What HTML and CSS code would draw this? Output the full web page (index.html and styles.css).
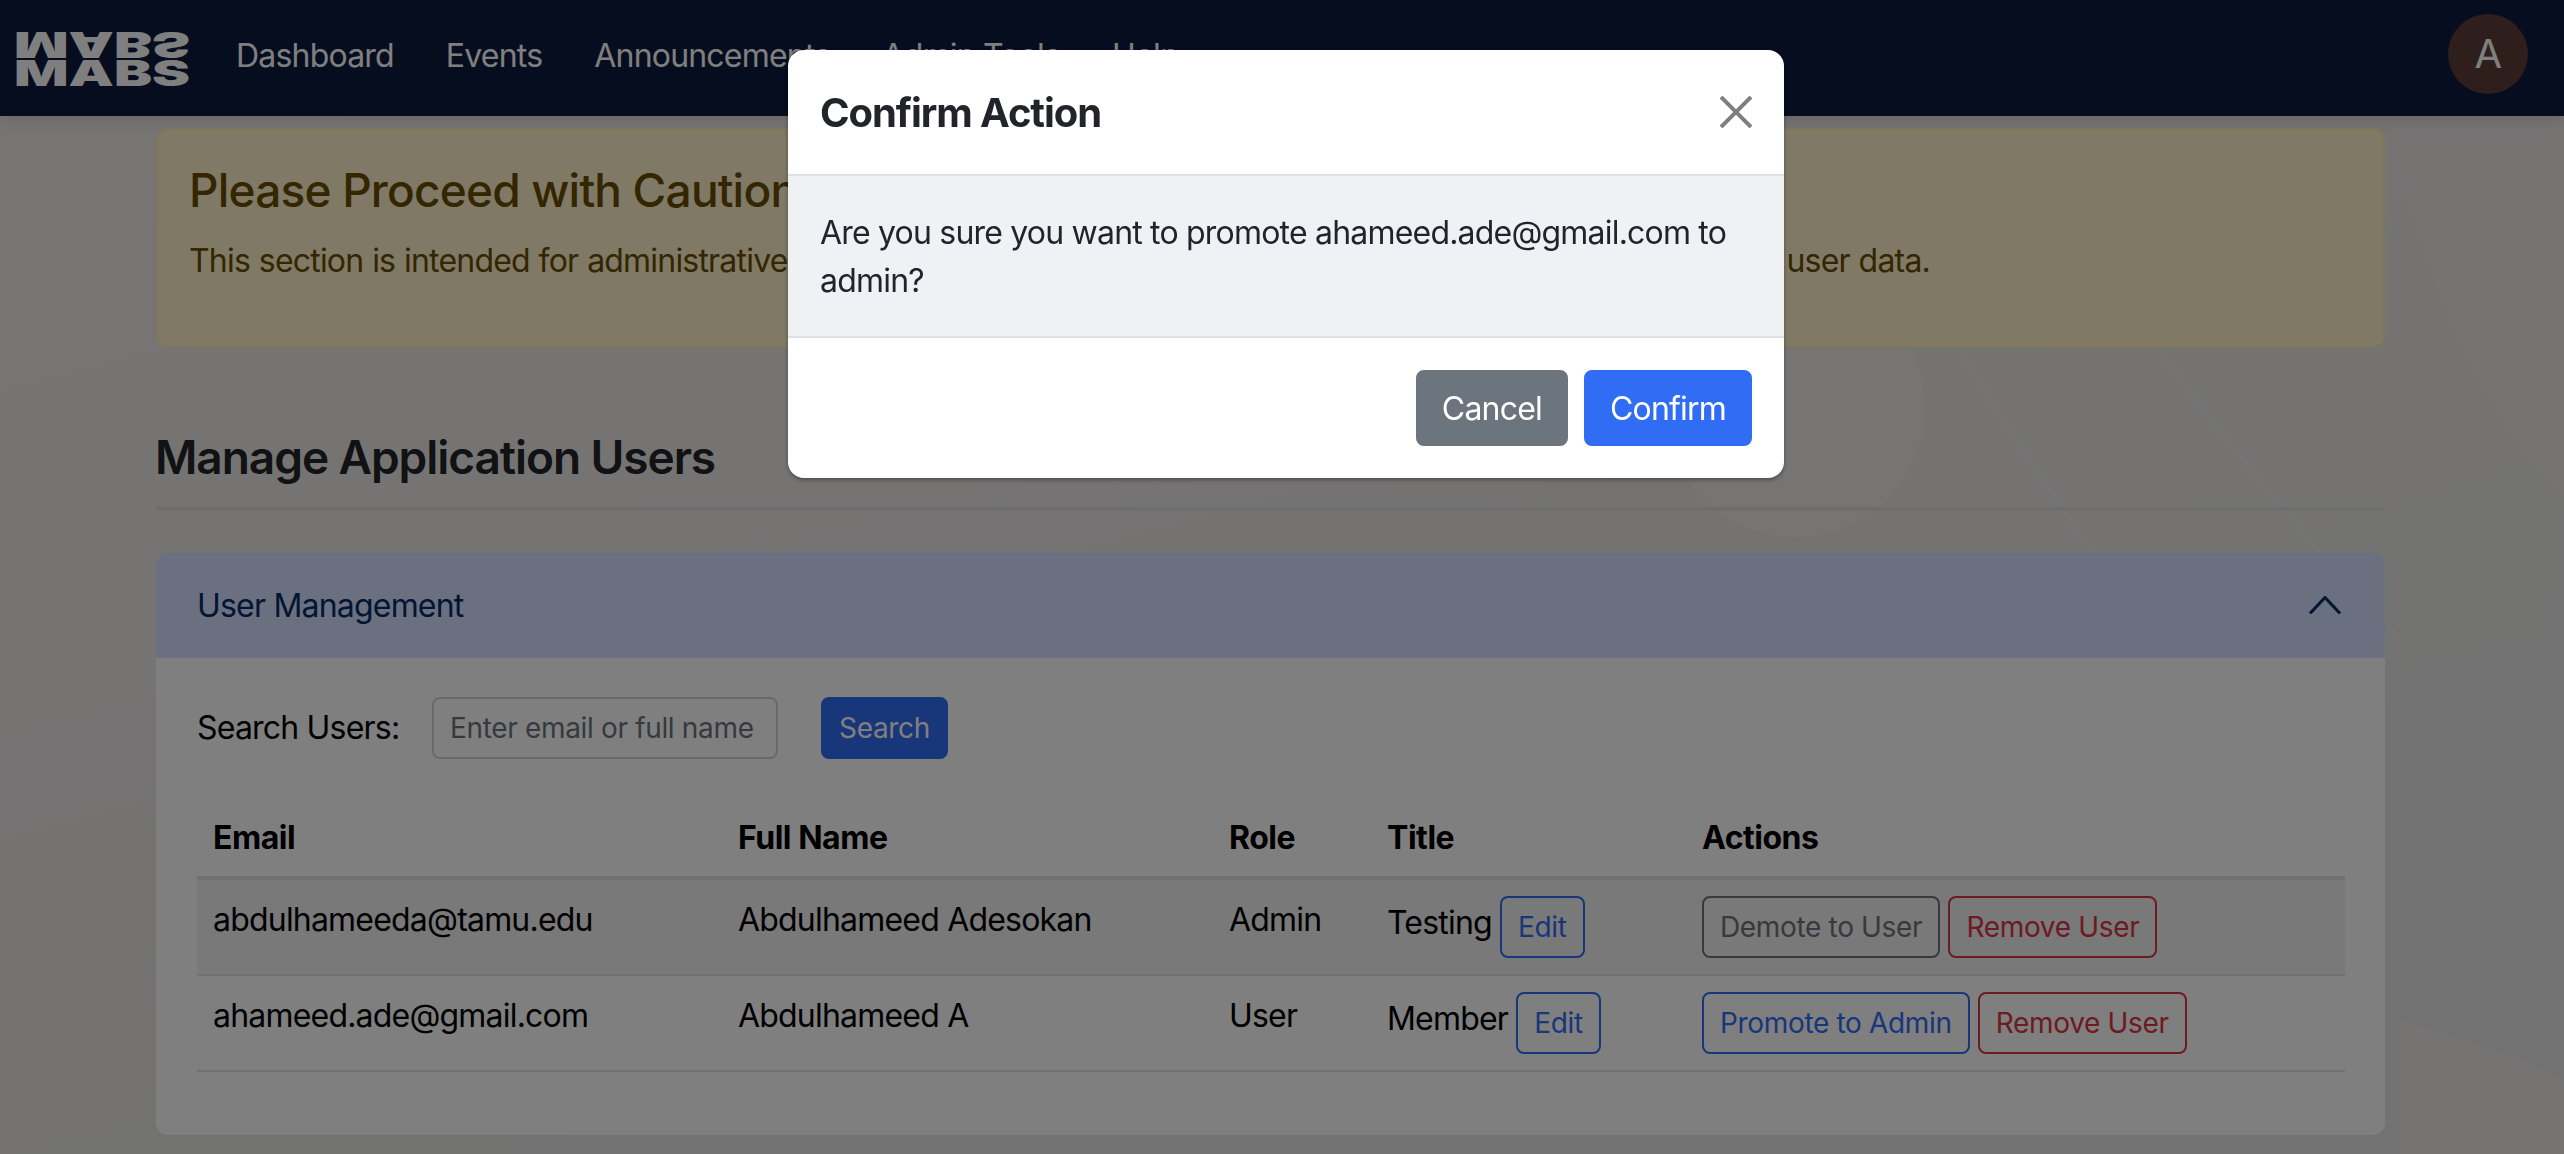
FILE: index.html
```html
<!DOCTYPE html>
<html lang="en">
  <head>
    <meta charset="UTF-8" />
    <meta name="viewport" content="width=device-width, initial-scale=1.0" />
    <title>Admin Tools</title>
    <link rel="stylesheet" href="styles.css">
  </head>
  <body>
    <!-- faint swirls behind the page -->
    <svg class="page-art" viewBox="0 0 2564 1154" aria-hidden="true">
      <path class="art-soft" d="M2390 116C2430 300 2490 420 2564 500V116Z" />
      <path class="art-line" d="M1960 350C2060 520 2200 700 2330 880" />
      <path class="art-line" d="M2160 350C2250 480 2330 560 2400 640" />
      <circle class="art-warm" cx="1795" cy="407" r="130" />
      <path class="art-soft" d="M2400 1020C2470 1040 2530 1060 2564 1080V1154H2400Z" />
    </svg>

    <nav class="navbar">
      <svg class="brand" viewBox="0 0 176 54" role="img" aria-label="MABS">
        <text class="brand-text" x="0" y="54" textLength="176" lengthAdjust="spacingAndGlyphs">MABS</text>
        <text class="brand-text" transform="matrix(1 0 0 -1 0 0)" x="0" y="0" textLength="176" lengthAdjust="spacingAndGlyphs">MABS</text>
      </svg>
      <ul class="nav-links">
        <li><a href="#">Dashboard</a></li>
        <li><a href="#">Events</a></li>
        <li><a href="#">Announcements</a></li>
        <li><a href="#">Admin Tools</a></li>
        <li><a href="#">Help</a></li>
      </ul>
      <div class="avatar">A</div>
    </nav>

    <main class="container">
      <div class="alert">
        <h4>Please Proceed with Caution</h4>
        <p>This section is intended for administrative use only. Changes made on this page can affect all permissions and user data.</p>
      </div>

      <h2 class="page-title">Manage Application Users</h2>
      <hr class="title-rule" />

      <section class="accordion">
        <div class="accordion-header">
          <span>User Management</span>
          <svg class="chevron" viewBox="0 0 32 18" aria-hidden="true">
            <path d="M1 17.5L16 1.5L31 17.5" />
          </svg>
        </div>
        <div class="accordion-body">
          <form class="search-row">
            <label for="userSearch">Search Users:</label>
            <input type="text" id="userSearch" placeholder="Enter email or full name" />
            <button type="button" class="btn btn-primary">Search</button>
          </form>

          <table class="users">
            <colgroup>
              <col class="col-email" />
              <col class="col-name" />
              <col class="col-role" />
              <col class="col-title" />
              <col class="col-actions" />
            </colgroup>
            <thead>
              <tr>
                <th>Email</th>
                <th>Full Name</th>
                <th>Role</th>
                <th>Title</th>
                <th>Actions</th>
              </tr>
            </thead>
            <tbody>
              <tr class="striped">
                <td>abdulhameeda@tamu.edu</td>
                <td>Abdulhameed Adesokan</td>
                <td>Admin</td>
                <td>Testing <button class="btn btn-outline-primary btn-edit">Edit</button></td>
                <td>
                  <button class="btn btn-outline-secondary">Demote to User</button>
                  <button class="btn btn-outline-danger">Remove User</button>
                </td>
              </tr>
              <tr>
                <td>ahameed.ade@gmail.com</td>
                <td>Abdulhameed A</td>
                <td>User</td>
                <td>Member <button class="btn btn-outline-primary btn-edit">Edit</button></td>
                <td>
                  <button class="btn btn-outline-primary">Promote to Admin</button>
                  <button class="btn btn-outline-danger">Remove User</button>
                </td>
              </tr>
            </tbody>
          </table>
        </div>
      </section>
    </main>

    <div class="backdrop"></div>

    <div class="modal">
      <div class="modal-header">
        <h5>Confirm Action</h5>
        <svg class="modal-close" viewBox="0 0 32 32" aria-label="Close">
          <path d="M1 1L31 31M31 1L1 31" />
        </svg>
      </div>
      <div class="modal-body">Are you sure you want to promote ahameed.ade@gmail.com to admin?</div>
      <div class="modal-footer">
        <button class="btn btn-large btn-secondary">Cancel</button>
        <button class="btn btn-large btn-confirm">Confirm</button>
      </div>
    </div>
  </body>
</html>
```

FILE: styles.css
```css
* {
  box-sizing: border-box;
}
html,
body {
  height: 100%;
}
body {
  margin: 0;
  overflow: hidden;
  font-family: Inter, "Noto Sans", sans-serif;
  font-size: 32px;
  line-height: 48px;
  letter-spacing: -0.025em;
  color: #000;
  background: linear-gradient(165deg, #efebe9 0%, #e8e6e5 55%, #e4e4e4 100%);
}

/* background art */
.page-art {
  position: absolute;
  top: 0;
  left: 0;
  width: 2564px;
  height: 1154px;
}
.art-soft {
  fill: #ebe8e7;
}
.art-warm {
  fill: #edeae6;
}
.art-line {
  fill: none;
  stroke: #ebe9e8;
  stroke-width: 5;
}

/* navbar */
.navbar {
  position: relative;
  display: flex;
  align-items: center;
  height: 116px;
  padding: 0 36px 0 14px;
  background-color: #0a1a3e;
  box-shadow: 0 4px 14px rgba(0, 0, 0, 0.12);
}
.brand {
  width: 176px;
  height: 54px;
  margin-top: 2px;
  flex-shrink: 0;
  overflow: visible;
}
.brand-text {
  font-family: Inter, sans-serif;
  font-size: 36px;
  font-weight: 900;
  letter-spacing: 0;
  fill: #fff;
}
.nav-links {
  display: flex;
  gap: 52px;
  margin: 0 0 4px 46px;
  padding: 0;
  list-style: none;
}
.nav-links a {
  color: #fff;
  text-decoration: none;
}
.avatar {
  width: 80px;
  height: 80px;
  margin: 0 0 8px auto;
  border-radius: 50%;
  background-color: #5c3e3b;
  color: #fff;
  font-size: 40px;
  line-height: 80px;
  text-align: center;
}

/* page content */
.container {
  position: relative;
  width: 2229px;
  margin: 12px 0 0 156px;
}
.alert {
  height: 220px;
  padding: 32px 31px;
  border: 2px solid #ffecb5;
  border-radius: 12px;
  background-color: #fff3cd;
  color: #664d03;
}
.alert h4 {
  margin: 0 0 19px;
  font-size: 46px;
  font-weight: 500;
  line-height: 56px;
}
.alert p {
  margin: 0;
  word-spacing: 0.6px;
}
.page-title {
  margin: 81px 0 0 -1px;
  font-size: 46px;
  font-weight: 600;
  line-height: 56px;
  letter-spacing: -0.023em;
  color: #212529;
}
.title-rule {
  height: 4px;
  margin: 22px 0 42px;
  border: 0;
  background-color: #dcdcdc;
}

/* accordion */
.accordion {
  height: 582px;
  border-radius: 12px;
  background-color: #fff;
  overflow: hidden;
}
.accordion-header {
  display: flex;
  align-items: center;
  justify-content: space-between;
  height: 105px;
  padding: 0 44px 0 41px;
  background-color: #d4e0ff;
  color: #052c65;
}
.chevron {
  width: 32px;
  height: 18px;
  margin-top: -2px;
}
.chevron path {
  fill: none;
  stroke: #052c65;
  stroke-width: 3;
}
.accordion-body {
  padding: 39px 40px 0 41px;
}
.search-row {
  display: flex;
  align-items: center;
}
.search-row label {
  width: 235px;
  margin-right: 0;
}
.search-row input {
  width: 346px;
  height: 62px;
  padding: 0 16px;
  border: 2px solid #ced4da;
  border-radius: 8px;
  background: none;
  font-family: inherit;
  font-size: 28px;
  letter-spacing: -0.012em;
  color: #212529;
}
.search-row input::placeholder {
  color: #6c757d;
  opacity: 1;
}
.search-row .btn {
  margin-left: 43px;
}

/* buttons */
.btn {
  height: 62px;
  padding: 0 16px;
  border: 2px solid transparent;
  border-radius: 8px;
  background: none;
  font-family: inherit;
  font-size: 28px;
  line-height: 42px;
  letter-spacing: -0.012em;
}
.btn-edit {
  vertical-align: -3px;
}
.btn-primary {
  background-color: #316cf4;
  border-color: #316cf4;
  color: #fff;
}
.btn-outline-primary {
  border-color: #316cf4;
  color: #316cf4;
}
.btn-outline-secondary {
  border-color: #6c757d;
  color: #6c757d;
}
.btn-outline-danger {
  border-color: #dc3545;
  color: #dc3545;
}
.btn-large {
  height: 76px;
  padding: 2px 24px 0;
  font-size: 32px;
  letter-spacing: -0.025em;
  color: #fff;
}
.btn-secondary {
  background-color: #6c757d;
  border-color: #6c757d;
}
.btn-confirm {
  background-color: #316cf4;
  border-color: #316cf4;
}

/* users table */
.users {
  width: 2148px;
  margin-top: 37px;
  border-collapse: collapse;
  table-layout: fixed;
}
.col-email {
  width: 525px;
}
.col-name {
  width: 491px;
}
.col-role {
  width: 158px;
}
.col-title {
  width: 315px;
}
.users th,
.users td {
  padding: 16px;
  border-bottom: 2px solid #dee2e6;
  text-align: left;
  vertical-align: top;
}
.users th {
  padding: 18px 16px 14px;
  font-weight: 700;
  letter-spacing: -0.015em;
  border-bottom-width: 4px;
}
.striped td {
  background-color: #f2f2f2;
}

/* modal */
.backdrop {
  position: fixed;
  top: 0;
  left: 0;
  width: 100%;
  height: 100%;
  background-color: rgba(0, 0, 0, 0.5);
}
.modal {
  position: fixed;
  top: 50px;
  left: 788px;
  width: 996px;
  border-radius: 16px;
  background-color: #fff;
  box-shadow: 0 2px 4px rgba(0, 0, 0, 0.35);
  color: #212529;
  overflow: hidden;
}
.modal-header {
  display: flex;
  align-items: center;
  justify-content: space-between;
  height: 126px;
  padding: 0 32px;
  border-bottom: 2px solid #dee2e6;
}
.modal-header h5 {
  margin: 2px 0 0;
  font-size: 40px;
  font-weight: 700;
  line-height: 48px;
  letter-spacing: -0.027em;
}
.modal-close {
  width: 32px;
  height: 32px;
}
.modal-close path {
  fill: none;
  stroke: #808080;
  stroke-width: 4;
}
.modal-body {
  padding: 33px 32px 31px;
  background-color: #f0f1f5;
}
.modal-footer {
  display: flex;
  justify-content: flex-end;
  gap: 16px;
  padding: 32px;
  border-top: 2px solid #dee2e6;
}
```
